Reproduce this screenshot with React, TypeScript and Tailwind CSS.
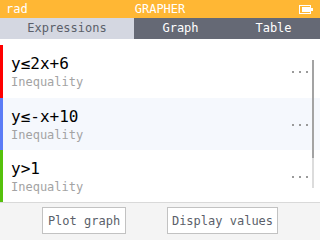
import React from 'react';

type Row = { expr: string; color: string; bg: string; h: string };

const rows: Row[] = [
  { expr: 'y≤2x+6', color: 'bg-[#ff0000]', bg: 'bg-white', h: 'h-[53px]' },
  { expr: 'y≤-x+10', color: 'bg-[#5b7cf6]', bg: 'bg-[#f5f8fd]', h: 'h-[52px]' },
  { expr: 'y>1', color: 'bg-[#56c10c]', bg: 'bg-white', h: 'h-[52px]' },
];

function Battery() {
  return (
    <svg width="14" height="9" viewBox="0 0 14 9" className="block">
      <rect x="0.5" y="0.5" width="11" height="8" fill="none" stroke="#fff" />
      <rect x="3" y="2" width="8" height="5" fill="#fff" />
      <rect x="12" y="3" width="2" height="3" fill="#fff" />
    </svg>
  );
}

function Dots() {
  return (
    <div className="flex items-center gap-[5px]">
      <span className="h-[2px] w-[2px] bg-[#9a9a9a]" />
      <span className="h-[2px] w-[2px] bg-[#9a9a9a]" />
      <span className="h-[2px] w-[2px] bg-[#9a9a9a]" />
    </div>
  );
}

export default function App() {
  return (
    <div className="flex h-[240px] w-[320px] flex-col overflow-hidden bg-white font-['DejaVu_Sans_Mono',monospace]">
      <div className="grid h-[18px] grid-cols-[1fr_auto_1fr] items-center bg-[#ffb734] px-[6px] text-[12px] leading-[18px] text-white">
        <span>rad</span>
        <span>GRAPHER</span>
        <div className="flex justify-end pr-[1px]">
          <Battery />
        </div>
      </div>

      <div className="flex h-[21px] text-[12px] leading-[21px]">
        <div className="w-[134px] bg-[#d4d7e1] text-center text-[#5b5f6a]">Expressions</div>
        <div className="w-[93px] bg-[#656975] text-center text-white">Graph</div>
        <div className="w-[93px] bg-[#656975] text-center text-white">Table</div>
      </div>

      <div className="relative flex-1 bg-white pt-[6px]">
        {rows.map((r) => (
          <div key={r.expr} className={`flex ${r.h} ${r.bg}`}>
            <div className={`w-[3px] ${r.color}`} />
            <div className="flex-1 pl-[8px] pt-[9px]">
              <div className="text-[16px] leading-[20px] text-black">{r.expr}</div>
              <div className="mt-[1px] text-[12px] leading-[15px] text-[#a3a3a3]">Inequality</div>
            </div>
            <div className="flex items-center pr-[12px] pt-[1px]">
              <Dots />
            </div>
          </div>
        ))}
        <div className="absolute left-[312px] top-[21px] flex h-[128px] w-[2px] flex-col bg-[#dcdcdc]">
          <div className="h-[98px] bg-[#a3a3a3]" />
        </div>
      </div>

      <div className="flex h-[38px] justify-center gap-[41px] border-t border-[#d9d9d9] bg-[#f4f4f4] pt-[4px]">
        <button className="h-[27px] w-[84px] border border-[#c2c2c2] bg-white text-center text-[12px] text-[#5b5f6a]">
          Plot graph
        </button>
        <button className="h-[27px] w-[111px] border border-[#c2c2c2] bg-white text-center text-[12px] text-[#5b5f6a]">
          Display values
        </button>
      </div>
    </div>
  );
}
